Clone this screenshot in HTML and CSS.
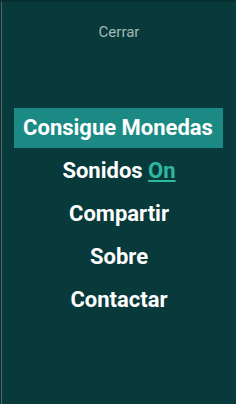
FILE: index.html
```html
<!DOCTYPE html>
<html>
<head>
<meta charset="utf-8">
<link rel="stylesheet" href="styles.css">
</head>
<body>
<div class="app">
  <div class="close">Cerrar</div>
  <nav class="menu">
    <div class="item active">Consigue Monedas</div>
    <div class="item">Sonidos <span class="on">On</span></div>
    <div class="item">Compartir</div>
    <div class="item">Sobre</div>
    <div class="item">Contactar</div>
  </nav>
</div>
</body>
</html>
```
FILE: styles.css
```css
html, body {
  margin: 0;
  padding: 0;
  background: #06302f;
  width: 236px;
  height: 404px;
  overflow: hidden;
}
.app {
  box-sizing: border-box;
  width: 235px;
  height: 403px;
  margin: 1px 0 0 1px;
  border-left: 1px solid #55696a;
  border-top: 1px solid #0c3233;
  background: #083a3b;
  font-family: Roboto, "Liberation Sans", sans-serif;
  display: flex;
  flex-direction: column;
  align-items: center;
}
.close {
  margin-top: 20px;
  font-size: 15px;
  color: #a5b8b6;
  line-height: 20px;
}
.menu {
  margin-top: 66px;
  display: flex;
  flex-direction: column;
  align-items: center;
  width: 100%;
}
.item {
  color: #ffffff;
  font-weight: 700;
  font-size: 22px;
  line-height: 40px;
  height: 40px;
  margin-bottom: 3px;
  text-align: center;
}
.item.active {
  background: #1b8a84;
  width: 209px;
  margin-left: -2px;
}
.on {
  color: #2fb8a1;
  text-decoration: underline;
  text-underline-offset: 2px;
}
```
